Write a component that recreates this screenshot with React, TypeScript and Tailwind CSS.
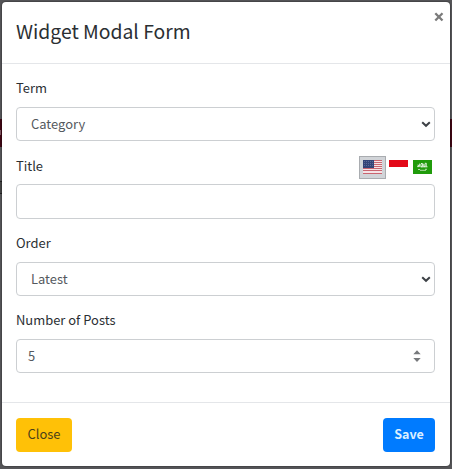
import type { ReactNode } from "react";

function Label({ children }: { children: ReactNode }) {
  return <label className="block h-[22px] text-[12.95px] leading-[22px] text-[#2b2f33]">{children}</label>;
}

function Select({ value }: { value: string }) {
  return (
    <button
      type="button"
      className="flex h-[34px] w-full items-center justify-between rounded-[4px] border border-[#cccfd2] bg-white pl-[14px] pr-[3px] text-[12.95px] leading-[20px] text-[#54595e]"
    >
      <span>{value}</span>
      <svg width="10" height="7" viewBox="0 0 10 7" fill="none">
        <path d="M1.2 1.2 5 4.8 8.8 1.2" stroke="#3d4146" strokeWidth="2" />
      </svg>
    </button>
  );
}

function UsFlag() {
  return (
    <svg width="19" height="14" viewBox="0 0 19 14">
      <rect width="19" height="14" fill="#f5e3e6" />
      {[0, 2, 4, 6, 8, 10, 13].map((y) => (
        <rect key={y} y={y} width="19" height="1" fill="#c96570" />
      ))}
      <rect width="11" height="8" fill="#344477" />
      {[1.5, 3.5, 5.5].map((y) =>
        [1.5, 3.5, 5.5, 7.5, 9.5].map((x) => <circle key={`${x}-${y}`} cx={x} cy={y} r="0.4" fill="#8d9abf" />),
      )}
    </svg>
  );
}

function IdFlag() {
  return (
    <svg width="19" height="14" viewBox="0 0 19 14">
      <rect width="19" height="14" fill="#fff" />
      <rect width="19" height="7" fill="#e30918" />
    </svg>
  );
}

function SaFlag() {
  return (
    <svg width="19" height="14" viewBox="0 0 19 14">
      <rect width="19" height="14" fill="#209b0b" />
      <path
        d="M4.2 6.6h2.3M5 4.6v1h1.5M6.7 3.6v3M8 4v2.7h1.5M9.6 3.2v3.2M10.8 3.8v2.8h1.2V4.2M13.2 3.2v3.6M8 3.5h1M11.8 3.3h1.5M7.5 6.8h7"
        stroke="#e2f2de"
        strokeWidth="1"
        fill="none"
      />
      <path d="M5 9.5h2M7 10.3h6M12 9.3h2" stroke="#c2e3bb" strokeWidth="0.9" />
    </svg>
  );
}

export default function App() {
  return (
    <div className="relative h-[469px] w-[452px] overflow-hidden bg-[#555558] px-[2px] pt-[2px] font-['Noto_Sans_CJK_SC','Noto_Sans',sans-serif]">
      <div className="absolute left-0 top-[119px] h-[28px] w-full bg-[#3f0714]" />
      <div className="absolute left-0 top-[130px] h-[5px] w-[1px] bg-[#7d5560]" />
      <div className="absolute left-0 top-[181px] h-[13px] w-[2px] border-y border-[#222] bg-[#444]" />
      <div className="relative flex h-[464px] w-[448px] flex-col rounded-[4px] bg-white shadow-[0_0_1px_1px_rgba(0,0,0,0.2)]">
        <header className="flex h-[62px] shrink-0 items-start justify-between border-b border-[#e4e6e9] pl-[14px] pr-[6px]">
          <h5 className="pt-[14px] text-[19.35px] leading-[30px] text-[#2b2f33]">Widget Modal Form</h5>
          <button type="button" aria-label="Close dialog" className="mt-[10px]">
            <svg width="10" height="10" viewBox="0 0 10 10" fill="none">
              <path d="M1.3 1.3l7.2 7.2M8.5 1.3 1.3 8.5" stroke="#7b7b7b" strokeWidth="2.3" />
            </svg>
          </button>
        </header>

        <main className="flex h-[338px] shrink-0 flex-col px-[14px] pr-[15px] pt-[13px]">
          <Label>Term</Label>
          <div className="mt-[8px]">
            <Select value="Category" />
          </div>

          <div className="mt-[14px] flex h-[24px] items-start justify-between">
            <Label>Title</Label>
            <div className="flex items-start gap-[3px] pr-[3px] pt-px">
              <span className="flex h-[23px] w-[27px] items-start justify-center border border-[#a9acb0] bg-[#d1d4d8] pt-[3px]">
                <UsFlag />
              </span>
              <span className="mt-[4px]">
                <IdFlag />
              </span>
              <span className="ml-[2px] mt-[4px]">
                <SaFlag />
              </span>
            </div>
          </div>
          <input
            aria-label="Title"
            className="mt-[5px] block h-[35px] w-full shrink-0 rounded-[4px] border border-[#cccfd2] bg-white px-[11px] text-[12.95px] text-[#54595e]"
          />

          <div className="mt-[13px]">
            <Label>Order</Label>
          </div>
          <div className="mt-[8px]">
            <Select value="Latest" />
          </div>

          <div className="mt-[13px]">
            <Label>Number of Posts</Label>
          </div>
          <div className="mt-[8px] flex h-[34px] shrink-0 items-center justify-between rounded-[4px] border border-[#cccfd2] pl-[11px] pr-[13px] text-[12.95px] leading-[20px] text-[#54595e]">
            <span>5</span>
            <svg width="8" height="12" viewBox="0 0 8 12" fill="#77797c">
              <path d="M0.3 4.3 4 0.2l3.7 4.1zM0.3 7.9 4 12l3.7-4.1z" />
            </svg>
          </div>
        </main>

        <footer className="flex h-[64px] items-start justify-between border-t border-[#e4e6e9] pl-[14px] pr-[15px] pt-[15px]">
          <button type="button" className="flex h-[34px] w-[56px] justify-center rounded-[4px] bg-[#ffc107] text-[12.95px] leading-[32px] text-[#4a3f1a]">
            Close
          </button>
          <button type="button" className="flex h-[34px] w-[52px] justify-center rounded-[4px] bg-[#007bff] text-[12.5px] font-bold leading-[32px] text-[#dcefff]">
            Save
          </button>
        </footer>
      </div>
    </div>
  );
}
